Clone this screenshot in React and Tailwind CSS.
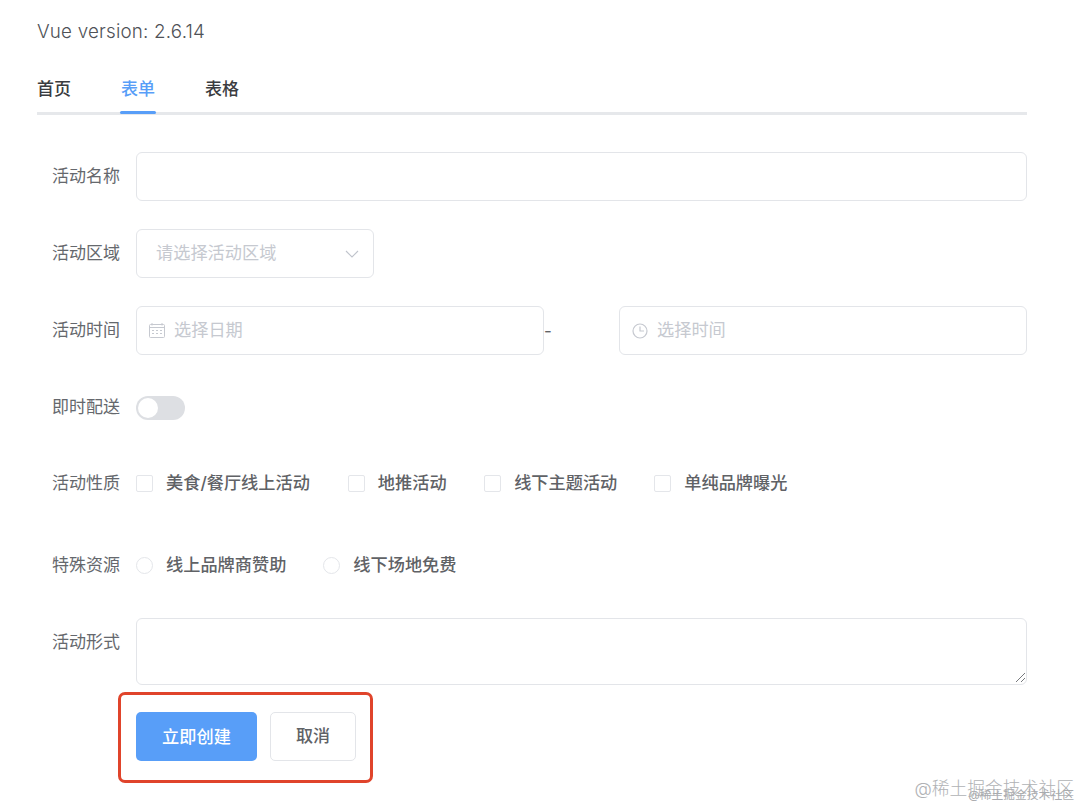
const FONT = "font-['Inter','Noto_Sans_CJK_SC',sans-serif]";

function Label({ children, className = "" }) {
  return (
    <div className={`w-[99px] shrink-0 pl-[15px] text-[17px] leading-[24px] text-[#65686d] ${className}`}>
      {children}
    </div>
  );
}

function Check({ label, className = "" }) {
  return (
    <div className={`flex items-center ${className}`}>
      <span className="h-[17px] w-[17px] rounded-[2px] border-[1.5px] border-[#e4e6ea] bg-white" />
      <span className="ml-[13px] text-[17.2px] leading-[24px] font-medium text-[#606266]">{label}</span>
    </div>
  );
}

function Radio({ label, className = "" }) {
  return (
    <div className={`flex items-center ${className}`}>
      <span className="h-[17px] w-[17px] rounded-full border-[1.5px] border-[#e4e6ea] bg-white" />
      <span className="ml-[13px] text-[17.2px] leading-[24px] font-medium text-[#606266]">{label}</span>
    </div>
  );
}

function Field({ className = "", children }) {
  return (
    <div className={`flex h-[49px] items-center rounded-[6px] border-[1.5px] border-[#e3e5e9] bg-white ${className}`}>
      {children}
    </div>
  );
}

export default function App() {
  return (
    <div className={`relative h-[804px] w-[1080px] overflow-hidden bg-white pl-[37px] ${FONT}`}>
      <div className="w-[990px]">
        <div className="pt-[20px] text-[18.8px] leading-[24px] tracking-[0.2px] font-light text-[#4f5257]">Vue version: 2.6.14</div>

        <div className="mt-[33px] flex h-[38px] gap-[50px] border-b-[3px] border-[#e6e8eb]">
          <div className="h-[35px] text-[17px] leading-[24px] font-medium text-[#3a3c40]">首页</div>
          <div className="relative h-[35px] text-[17px] leading-[24px] font-medium text-[#589ef8]">
            表单
            <span className="absolute -left-px -right-px top-[34px] h-[3px] rounded-[2px] bg-[#589ef8]" />
          </div>
          <div className="h-[35px] text-[17px] leading-[24px] font-medium text-[#3a3c40]">表格</div>
        </div>

        <div className="mt-[37px] flex items-center">
          <Label className="pb-[2px]">活动名称</Label>
          <Field className="w-[891px]" />
        </div>

        <div className="mt-[28px] flex items-center">
          <Label className="pb-[2px]">活动区域</Label>
          <Field className="w-[238px] pl-[19px] pr-[14px]">
            <span className="flex-1 pb-[2px] text-[17.2px] text-[#c6c9d0]">请选择活动区域</span>
            <svg width="14" height="8" viewBox="0 0 14 8" fill="none" stroke="#c0c4cc" strokeWidth="1.1">
              <path d="M1 1l6 6 6-6" />
            </svg>
          </Field>
        </div>

        <div className="mt-[28px] flex items-center">
          <Label className="pb-[2px]">活动时间</Label>
          <Field className="w-[408px] pl-[12px]">
            <svg width="16" height="15" viewBox="0 0 16 15" fill="none" stroke="#c6c9d0" strokeWidth="1">
              <rect x="0.5" y="1.5" width="15" height="13" rx="1" />
              <path d="M0.5 4.5h15M3 0v2.5M13 0v2.5" />
              <path d="M3 7.5h2M7 7.5h2M11 7.5h2M3 10.5h2M7 10.5h2M11 10.5h2" />
            </svg>
            <span className="ml-[9px] pb-[2px] text-[17.2px] text-[#c6c9d0]">选择日期</span>
          </Field>
          <div className="w-[75px] text-[17px] leading-[24px] text-[#606266]">-</div>
          <Field className="w-[408px] pl-[12px]">
            <svg width="16" height="16" viewBox="0 0 16 16" fill="none" stroke="#c6c9d0" strokeWidth="1.2">
              <circle cx="8" cy="8" r="7" />
              <path d="M8 3.5V8h4" />
            </svg>
            <span className="ml-[9px] pb-[2px] text-[17.2px] text-[#c6c9d0]">选择时间</span>
          </Field>
        </div>

        <div className="mt-[41px] flex h-[24px] items-center">
          <Label className="-mt-[3px]">即时配送</Label>
          <div className="flex h-[24px] w-[49px] items-center rounded-full bg-[#dddfe3] pl-[2px]">
            <span className="h-[20px] w-[20px] rounded-full bg-white" />
          </div>
        </div>

        <div className="mt-[51px] flex items-center">
          <Label>活动性质</Label>
          <Check label="美食/餐厅线上活动" />
          <Check label="地推活动" className="ml-[38px]" />
          <Check label="线下主题活动" className="ml-[37.5px]" />
          <Check label="单纯品牌曝光" className="ml-[37px]" />
        </div>

        <div className="mt-[58px] flex items-center">
          <Label>特殊资源</Label>
          <Radio label="线上品牌商赞助" />
          <Radio label="线下场地免费" className="ml-[37px]" />
        </div>

        <div className="mt-[41px] flex items-start">
          <Label className="pt-[12px]">活动形式</Label>
          <div className="relative h-[67px] w-[891px]">
            <textarea className="block h-full w-full resize-none rounded-[6px] border-[1.5px] border-[#e3e5e9] bg-white outline-none" />
            <svg className="absolute bottom-[2px] right-[1px]" width="11" height="11" viewBox="0 0 11 11" fill="none" stroke="#77797d" strokeWidth="1">
              <path d="M1 10L10 1M6 10l4-4" />
            </svg>
          </div>
        </div>

        <div className="mt-[7px] ml-[81px] flex h-[91px] w-[255px] items-start gap-[13px] rounded-[7px] border-[3px] border-[#e0442b] pl-[15px] pt-[17px]">
          <div className="flex h-[49px] w-[121px] items-center justify-center rounded-[5px] bg-[#589ef8] text-[17.2px] font-medium text-white">
            立即创建
          </div>
          <div className="flex h-[49px] w-[86px] items-center justify-center rounded-[5px] border-[1.5px] border-[#e3e5e9] bg-white text-[17px] font-medium text-[#606266]">
            取消
          </div>
        </div>
      </div>

      <div className="absolute right-[6px] top-[776px] text-[17.8px] leading-[26px] whitespace-nowrap text-[#b0b2b5] font-light">
        @稀土掘金技术社区
      </div>
      <div className="absolute right-[6px] top-[787px] text-[11.8px] leading-[16px] whitespace-nowrap text-[#a9abae]">
        @稀土掘金技术社区
      </div>
    </div>
  );
}
